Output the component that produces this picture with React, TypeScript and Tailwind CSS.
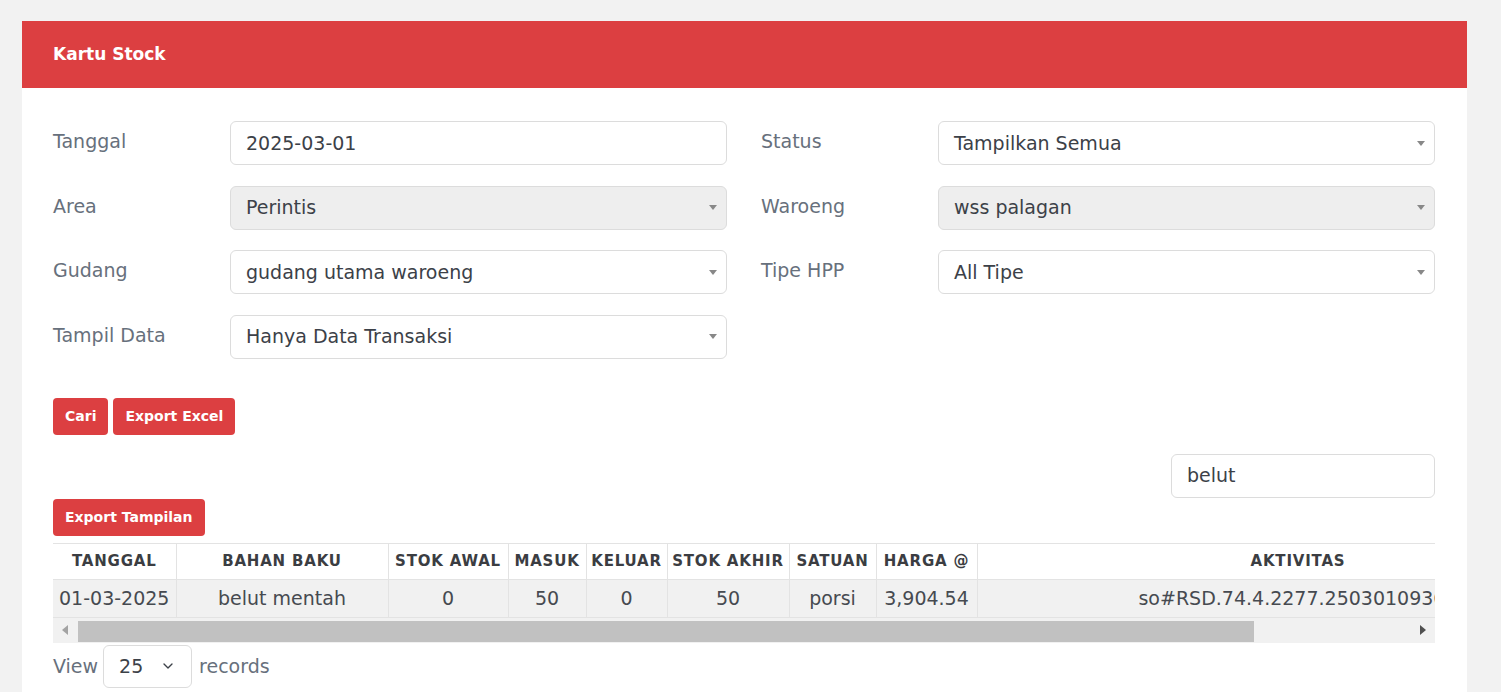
import { ChevronDown } from "lucide-react";

const FIELDS = [
  { label: "Tanggal", value: "2025-03-01", kind: "input" },
  { label: "Status", value: "Tampilkan Semua", kind: "select" },
  { label: "Area", value: "Perintis", kind: "disabled" },
  { label: "Waroeng", value: "wss palagan", kind: "disabled" },
  { label: "Gudang", value: "gudang utama waroeng", kind: "select" },
  { label: "Tipe HPP", value: "All Tipe", kind: "select" },
  { label: "Tampil Data", value: "Hanya Data Transaksi", kind: "select" },
];

const COLS = [
  { title: "Tanggal", w: 123, value: "01-03-2025" },
  { title: "Bahan Baku", w: 212, value: "belut mentah" },
  { title: "Stok Awal", w: 120, value: "0" },
  { title: "Masuk", w: 78, value: "50" },
  { title: "Keluar", w: 81, value: "0" },
  { title: "Stok Akhir", w: 122, value: "50" },
  { title: "Satuan", w: 87, value: "porsi" },
  { title: "Harga @", w: 101, value: "3,904.54" },
  { title: "Aktivitas", w: 642, value: "so#RSD.74.4.2277.25030109365" },
];

function Field({ label, value, kind }: { label: string; value: string; kind: string }) {
  return (
    <div className="flex items-center">
      <div className="w-[177px] pb-[3px] text-[#67707c]">{label}</div>
      <div
        className={`flex-1 h-[44px] flex items-center justify-between pl-[15px] pr-[9px] rounded-[6px] border border-[#dcdcdc] text-[#3c4148] ${
          kind === "disabled" ? "bg-[#eeeeee]" : "bg-white"
        }`}
      >
        <span>{value}</span>
        {kind !== "input" && (
          <span className="w-0 h-0 border-x-[4.5px] border-x-transparent border-t-[5px] border-t-[#888888]" />
        )}
      </div>
    </div>
  );
}

function RedButton({ children }: { children: string }) {
  return (
    <button className="h-[37px] px-3 rounded-[4px] bg-[#dc3f41] text-white text-[14px] font-bold">
      {children}
    </button>
  );
}

export default function App() {
  return (
    <div className="min-h-screen bg-[#f2f2f2] pt-[21px] pl-[22px] pr-[34px] font-['DejaVu_Sans',sans-serif] text-[19px]">
      <div className="bg-white">
        {/* card header */}
        <div className="h-[67px] bg-[#dc3f41] flex items-center px-[31px] text-white text-[17px] font-bold">
          Kartu Stock
        </div>

        <div className="pt-[33px] pl-[31px] pr-[32px] pb-10">
          {/* filter form */}
          <div className="grid grid-cols-2 gap-x-[34px] gap-y-[20.5px]">
            {FIELDS.map((f) => (
              <Field key={f.label} {...f} />
            ))}
          </div>

          <div className="mt-[39px] flex gap-[5px]">
            <RedButton>Cari</RedButton>
            <RedButton>Export Excel</RedButton>
          </div>

          <div className="mt-[19px] flex justify-end">
            <div className="w-[264px] h-[44px] flex items-center px-[15px] rounded-[6px] border border-[#dcdcdc] text-[#3c4148]">
              belut
            </div>
          </div>

          <div className="mt-[1px]">
            <RedButton>Export Tampilan</RedButton>
          </div>

          {/* table */}
          <div className="mt-[7px] overflow-hidden">
            <table className="table-fixed border-collapse w-[1566px]">
              <colgroup>
                {COLS.map((c) => (
                  <col key={c.title} style={{ width: c.w }} />
                ))}
              </colgroup>
              <thead>
                <tr className="h-[36px] bg-white border-t border-[#e3e3e3]">
                  {COLS.map((c) => (
                    <th
                      key={c.title}
                      className="border-x border-[#e3e3e3] first:border-l-0 px-1 text-center text-[15px] font-bold uppercase tracking-[0.8px] text-[#3b3d42] whitespace-nowrap"
                    >
                      {c.title}
                    </th>
                  ))}
                </tr>
              </thead>
              <tbody>
                <tr className="h-[38px] bg-[#f1f1f1] border-y border-[#e3e3e3]">
                  {COLS.map((c) => (
                    <td
                      key={c.title}
                      className="border-x border-[#e3e3e3] first:border-l-0 px-1 text-center text-[#464a50] whitespace-nowrap"
                    >
                      {c.value}
                    </td>
                  ))}
                </tr>
              </tbody>
            </table>
          </div>

          {/* horizontal scrollbar */}
          <div className="flex h-[25px] bg-[#f1f1f1]">
            <div className="w-[24px] flex items-center justify-center">
              <span className="w-0 h-0 border-y-[5px] border-y-transparent border-r-[6px] border-r-[#a3a3a3]" />
            </div>
            <div className="flex-1 pt-[3px] pl-[1px]">
              <div className="w-[1176px] h-[21px] bg-[#c1c1c1]" />
            </div>
            <div className="w-[24px] flex items-center justify-center">
              <span className="w-0 h-0 border-y-[5px] border-y-transparent border-l-[6px] border-l-[#505050]" />
            </div>
          </div>

          <div className="mt-[2px] flex items-center text-[#67707c]">
            <span>View</span>
            <div className="ml-[5px] w-[89px] h-[43px] flex items-center justify-between pl-[15px] pr-[15px] rounded-[6px] border border-[#dcdcdc] text-[#3c4148]">
              <span>25</span>
              <ChevronDown className="w-[16px] h-[16px]" strokeWidth={2} />
            </div>
            <span className="ml-[7px]">records</span>
          </div>
        </div>
      </div>
    </div>
  );
}
